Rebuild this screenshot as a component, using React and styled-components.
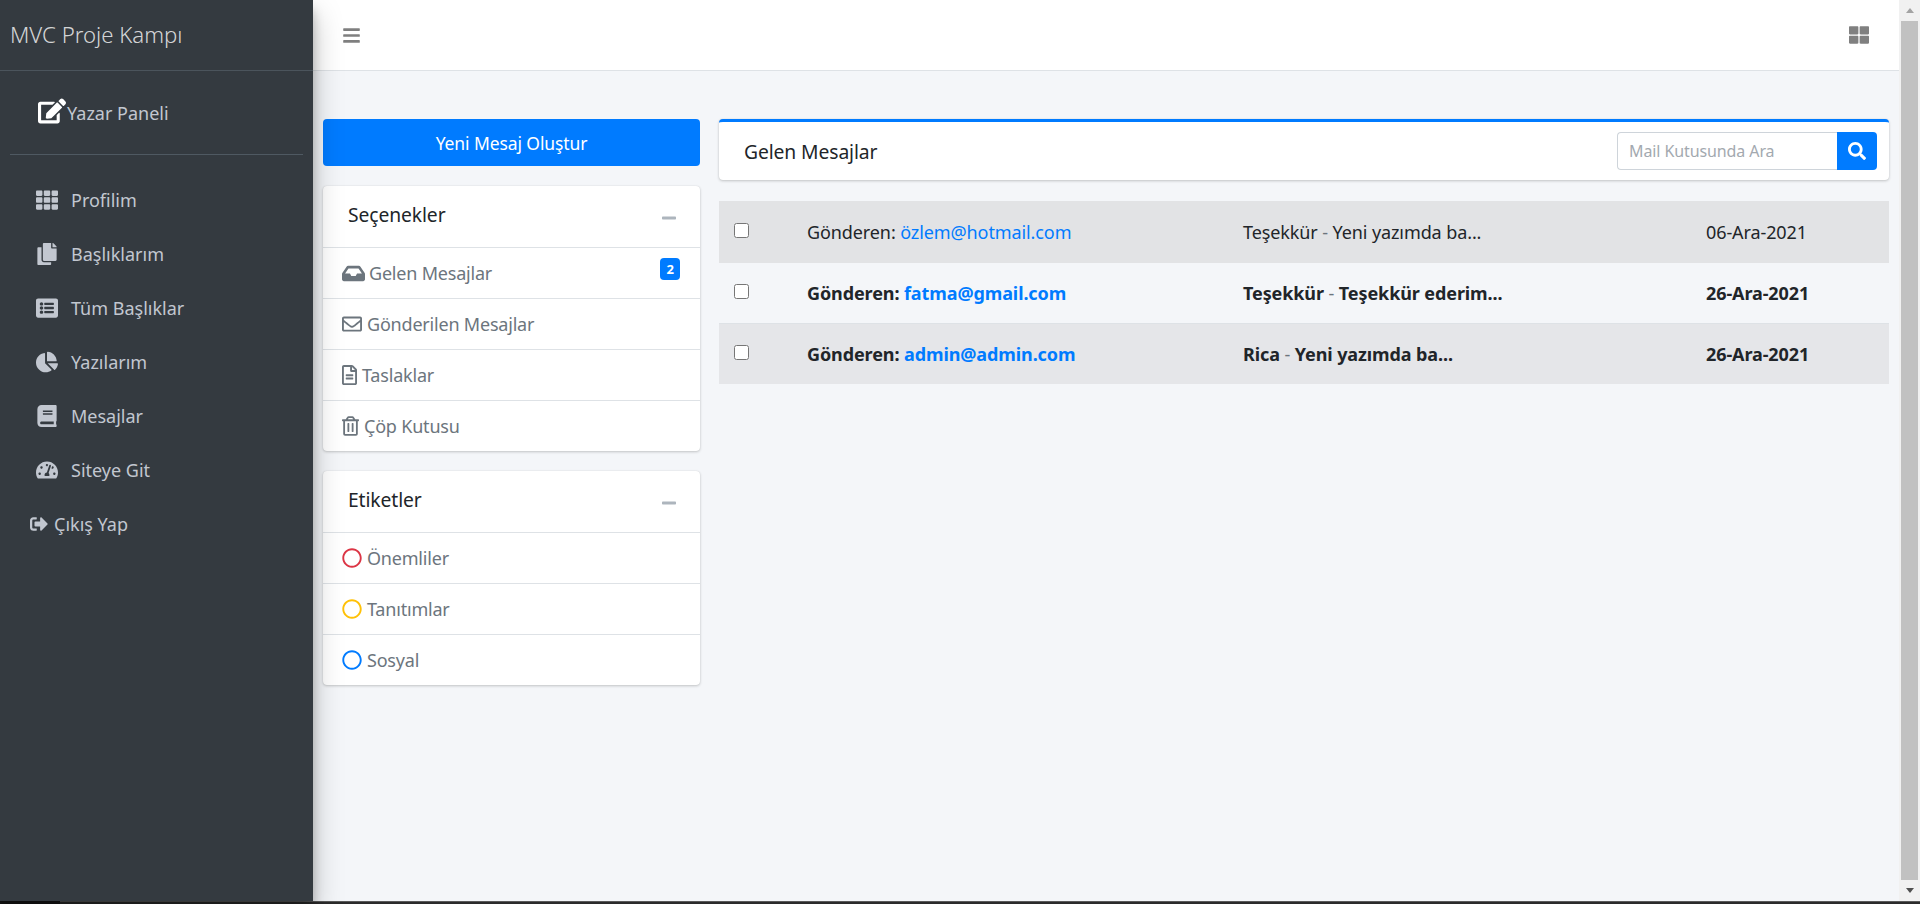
import React from "react";
import styled, { createGlobalStyle } from "styled-components";
import {
  FaBars,
  FaBook,
  FaChartPie,
  FaCopy,
  FaEdit,
  FaInbox,
  FaListAlt,
  FaMinus,
  FaRegCircle,
  FaRegEnvelope,
  FaRegFileAlt,
  FaRegTrashAlt,
  FaSearch,
  FaSignOutAlt,
  FaTachometerAlt,
  FaTh,
  FaThLarge,
} from "react-icons/fa";

const FONT = `"Noto Sans", "Open Sans", sans-serif`;

const GlobalStyle = createGlobalStyle`
  html, body {
    margin: 0;
    padding: 0;
    height: 100%;
    overflow: hidden;
  }
  * {
    box-sizing: border-box;
  }
  body {
    font-family: ${FONT};
    font-size: 18px;
    letter-spacing: -0.1px;
    color: #212529;
    background: #1f1f1f;
  }
`;

const Page = styled.div`
  display: flex;
  flex-direction: column;
  width: 1920px;
  height: 904px;
  overflow: hidden;
`;

const Window = styled.div`
  display: flex;
  flex: 1;
  min-height: 0;
`;

const Sidebar = styled.aside`
  position: relative;
  z-index: 2;
  width: 313px;
  flex-shrink: 0;
  background: #343a40;
  letter-spacing: 0;
  box-shadow: 0 14px 28px rgba(0, 0, 0, 0.25), 0 10px 10px rgba(0, 0, 0, 0.22);
`;

const Brand = styled.div`
  height: 71px;
  padding: 0 0 2px 10px;
  display: flex;
  align-items: center;
  border-bottom: 1px solid #4b545c;
  color: rgba(255, 255, 255, 0.8);
  font-size: 22.2px;
  font-weight: 300;
`;

const PanelLink = styled.div`
  height: 83px;
  padding-left: 38px;
  display: flex;
  align-items: center;
  color: #c2c7d0;

  & > svg {
    color: #fff;
    font-size: 28px;
    margin-right: 1px;
    margin-top: -3px;
  }
`;

const SideDivider = styled.div`
  height: 1px;
  margin: 0 10px;
  background: #4f5962;
`;

const SideNav = styled.nav`
  padding-top: 18px;
`;

const SideItem = styled.div`
  height: 54px;
  display: flex;
  align-items: center;
  padding-left: ${(props) => props.$left || 36}px;
  color: #c2c7d0;
`;

const SideIcon = styled.span`
  width: ${(props) => props.$width || 35}px;
  display: flex;
  align-items: center;
  font-size: ${(props) => props.$size || 22}px;
`;

const Main = styled.div`
  flex: 1;
  min-width: 0;
  display: flex;
  flex-direction: column;
  background: #f4f6f9;
`;

const Topbar = styled.header`
  height: 71px;
  flex-shrink: 0;
  display: flex;
  align-items: center;
  justify-content: space-between;
  padding: 0 30px 0 29px;
  background: #fff;
  border-bottom: 1px solid #dee2e6;
`;

const BarsButton = styled.span`
  display: flex;
  color: rgba(0, 0, 0, 0.5);
  font-size: 19px;
`;

const GridButton = styled.span`
  display: flex;
  color: #808080;
  font-size: 20px;
`;

const Content = styled.main`
  flex: 1;
  display: flex;
  gap: 19px;
  padding: 48px 10px 0 10px;
`;

const LeftColumn = styled.div`
  width: 377px;
  flex-shrink: 0;
  display: flex;
  flex-direction: column;
  gap: 20px;
`;

const ComposeButton = styled.button`
  height: 47px;
  border: 0;
  border-radius: 4px;
  background: #007bff;
  color: #fff;
  font-family: inherit;
  font-size: 17.5px;
  letter-spacing: inherit;
`;

const Card = styled.section`
  background: #fff;
  border-radius: 4px;
  box-shadow: 0 0 1px rgba(0, 0, 0, 0.125), 0 1px 3px rgba(0, 0, 0, 0.2);
`;

const CardHeader = styled.div`
  height: 61px;
  display: flex;
  align-items: center;
  justify-content: space-between;
  padding: 0 23px 4px 25px;
  font-size: 19.3px;
`;

const Collapse = styled.span`
  display: flex;
  color: #adb5bd;
  font-size: 16px;
  padding-top: 6px;
`;

const ListRow = styled.div`
  height: 51px;
  display: flex;
  align-items: center;
  gap: ${(props) => props.$gap || 5}px;
  padding: 0 20px 0 19px;
  border-top: 1px solid #dee2e6;
  color: #6c757d;
  letter-spacing: -0.2px;

  & > svg {
    font-size: ${(props) => props.$iconSize || 20}px;
    width: ${(props) => props.$iconWidth || props.$iconSize || 20}px;
    color: ${(props) => props.$iconColor || "#6c757d"};
    flex-shrink: 0;
  }
`;

const Badge = styled.span`
  margin-left: auto;
  align-self: flex-start;
  margin-top: 10px;
  width: 20px;
  height: 22px;
  display: flex;
  align-items: center;
  justify-content: center;
  border-radius: 4px;
  background: #007bff;
  color: #fff;
  font-size: 13px;
  font-weight: 700;
`;

const RightColumn = styled.div`
  flex: 1;
  min-width: 0;
  display: flex;
  flex-direction: column;
  gap: 21px;
`;

const InboxHeader = styled(Card)`
  height: 61px;
  display: flex;
  align-items: center;
  justify-content: space-between;
  padding: 0 12px 0 25px;
  border-top: 3px solid #007bff;
  font-size: 19.3px;
`;

const SearchBox = styled.div`
  display: flex;
  height: 38px;
`;

const SearchInput = styled.input`
  width: 220px;
  padding: 0 11px;
  border: 1px solid #ced4da;
  border-right: 0;
  border-radius: 4px 0 0 4px;
  outline: 0;
  font-family: inherit;
  font-size: 16px;
  letter-spacing: inherit;

  &::placeholder {
    color: #a3a9af;
    opacity: 1;
  }
`;

const SearchButton = styled.button`
  width: 40px;
  display: flex;
  align-items: center;
  justify-content: center;
  padding: 0;
  border: 0;
  border-radius: 0 4px 4px 0;
  background: #007bff;
  color: #fff;
  font-size: 18px;
`;

const MessageRow = styled.div`
  display: grid;
  grid-template-columns: 73px 436px 463px 1fr;
  align-items: center;
  height: ${(props) => props.$height}px;
  padding-left: 15px;
  border-top: ${(props) => (props.$ruled ? "1px solid #dee2e6" : "0")};
  background: ${(props) => props.$bg || "transparent"};
  font-weight: ${(props) => (props.$unread ? 700 : 400)};
  letter-spacing: -0.1px;
`;

const Dash = styled.span`
  font-weight: 400;
  color: #6c757d;
`;

const RowCheck = styled.input`
  width: 15px;
  height: 15px;
  margin: 0 0 3px;
`;

const MailLink = styled.a`
  color: #007bff;
  text-decoration: none;
`;

const Scrollbar = styled.div`
  width: 21px;
  flex-shrink: 0;
  display: flex;
  flex-direction: column;
  background: #f1f1f1;
`;

const ScrollArrow = styled.div`
  height: 21px;
  flex-shrink: 0;
  display: flex;
  align-items: center;
  justify-content: center;
`;

const ScrollThumb = styled.div`
  flex: 1;
  margin: 0 2px;
  background: #c1c1c1;
`;

const ArrowUp = styled.span`
  width: 0;
  height: 0;
  border-left: 4.5px solid transparent;
  border-right: 4.5px solid transparent;
  border-bottom: 5px solid #a3a3a3;
`;

const ArrowDown = styled.span`
  width: 0;
  height: 0;
  border-left: 4.5px solid transparent;
  border-right: 4.5px solid transparent;
  border-top: 5px solid #505050;
`;

const Taskbar = styled.div`
  height: 3px;
  flex-shrink: 0;
  display: flex;
  background: #161616;
`;

const TaskbarRest = styled.div`
  flex: 1;
  margin-left: 60px;
  background: #2b2b2b;
  border-top: 1px solid #5a5a5a;
`;

const sideItems = [
  { label: "Profilim", Icon: FaTh },
  { label: "Başlıklarım", Icon: FaCopy },
  { label: "Tüm Başlıklar", Icon: FaListAlt },
  { label: "Yazılarım", Icon: FaChartPie },
  { label: "Mesajlar", Icon: FaBook },
  { label: "Siteye Git", Icon: FaTachometerAlt },
];

const folders = [
  { label: "Gelen Mesajlar", Icon: FaInbox, size: 23, gap: 4, badge: 2 },
  { label: "Gönderilen Mesajlar", Icon: FaRegEnvelope, size: 20, gap: 5 },
  { label: "Taslaklar", Icon: FaRegFileAlt, size: 20, width: 15, gap: 5 },
  { label: "Çöp Kutusu", Icon: FaRegTrashAlt, size: 20, width: 17, gap: 5 },
];

const tags = [
  { label: "Önemliler", color: "#dc3545" },
  { label: "Tanıtımlar", color: "#ffc107" },
  { label: "Sosyal", color: "#007bff" },
];

const messages = [
  { mail: "özlem@hotmail.com", subject: "Teşekkür", body: "Yeni yazımda ba...", date: "06-Ara-2021", bg: "#e2e3e5", height: 62 },
  { mail: "fatma@gmail.com", subject: "Teşekkür", body: "Teşekkür ederim...", date: "26-Ara-2021", unread: true, height: 60 },
  { mail: "admin@admin.com", subject: "Rica", body: "Yeni yazımda ba...", date: "26-Ara-2021", unread: true, bg: "#e5e6e9", height: 61, ruled: true },
];

const App = () => {
  return (
    <Page>
      <GlobalStyle />
      <Window>
        <Sidebar>
          <Brand>MVC Proje Kampı</Brand>
          <PanelLink>
            <FaEdit />
            Yazar Paneli
          </PanelLink>
          <SideDivider />
          <SideNav>
            {sideItems.map(({ label, Icon }) => (
              <SideItem key={label}>
                <SideIcon>
                  <Icon />
                </SideIcon>
                {label}
              </SideItem>
            ))}
            <SideItem $left={30}>
              <SideIcon $width={24} $size={18}>
                <FaSignOutAlt />
              </SideIcon>
              Çıkış Yap
            </SideItem>
          </SideNav>
        </Sidebar>

        <Main>
          <Topbar>
            <BarsButton>
              <FaBars />
            </BarsButton>
            <GridButton>
              <FaThLarge />
            </GridButton>
          </Topbar>

          <Content>
            <LeftColumn>
              <ComposeButton>Yeni Mesaj Oluştur</ComposeButton>
              <Card>
                <CardHeader>
                  Seçenekler
                  <Collapse>
                    <FaMinus />
                  </Collapse>
                </CardHeader>
                {folders.map(({ label, Icon, size, width, gap, badge }) => (
                  <ListRow key={label} $iconSize={size} $iconWidth={width} $gap={gap}>
                    <Icon />
                    {label}
                    {badge ? <Badge>{badge}</Badge> : null}
                  </ListRow>
                ))}
              </Card>
              <Card>
                <CardHeader>
                  Etiketler
                  <Collapse>
                    <FaMinus />
                  </Collapse>
                </CardHeader>
                {tags.map(({ label, color }) => (
                  <ListRow key={label} $iconColor={color}>
                    <FaRegCircle />
                    {label}
                  </ListRow>
                ))}
              </Card>
            </LeftColumn>

            <RightColumn>
              <InboxHeader as="section">
                Gelen Mesajlar
                <SearchBox>
                  <SearchInput placeholder="Mail Kutusunda Ara" />
                  <SearchButton>
                    <FaSearch />
                  </SearchButton>
                </SearchBox>
              </InboxHeader>
              <div>
                {messages.map((msg) => (
                  <MessageRow
                    key={msg.mail}
                    $bg={msg.bg}
                    $unread={msg.unread}
                    $height={msg.height}
                    $ruled={msg.ruled}
                  >
                    <RowCheck type="checkbox" />
                    <span>
                      Gönderen: <MailLink>{msg.mail}</MailLink>
                    </span>
                    <span>
                      {msg.subject} <Dash>-</Dash> {msg.body}
                    </span>
                    <span>{msg.date}</span>
                  </MessageRow>
                ))}
              </div>
            </RightColumn>
          </Content>
        </Main>

        <Scrollbar>
          <ScrollArrow>
            <ArrowUp />
          </ScrollArrow>
          <ScrollThumb />
          <ScrollArrow>
            <ArrowDown />
          </ScrollArrow>
        </Scrollbar>
      </Window>
      <Taskbar>
        <TaskbarRest />
      </Taskbar>
    </Page>
  );
};

export default App;
